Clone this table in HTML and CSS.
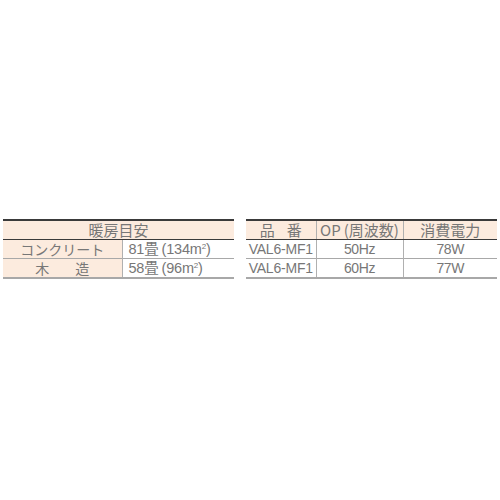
FILE: index.html
```html
<!DOCTYPE html>
<html lang="ja">
<head>
<meta charset="utf-8">
<link rel="stylesheet" href="styles.css">
</head>
<body>
<div class="wrap">
  <table class="spec left">
    <colgroup><col class="c1"><col class="c2"></colgroup>
    <thead>
      <tr><th colspan="2" class="jp">暖房目安</th></tr>
    </thead>
    <tbody>
      <tr><td class="label jp">コンクリート</td><td class="val">81畳<span class="p">(</span>134m<sup>2</sup>)</td></tr>
      <tr><td class="label jp"><span class="spread w54"><span>木</span><span>造</span></span></td><td class="val">58畳<span class="p">(</span>96m<sup>2</sup>)</td></tr>
    </tbody>
  </table>
  <table class="spec right">
    <colgroup><col class="r1"><col class="r2"><col class="r3"></colgroup>
    <thead>
      <tr>
        <th class="jp"><span class="spread w42"><span>品</span><span>番</span></span></th>
        <th class="jp">OP<span class="p">(</span>周波数)</th>
        <th class="jp">消費電力</th>
      </tr>
    </thead>
    <tbody>
      <tr><td class="model">VAL6-MF1</td><td class="num">50Hz</td><td class="num">78W</td></tr>
      <tr><td class="model">VAL6-MF1</td><td class="num">60Hz</td><td class="num">77W</td></tr>
    </tbody>
  </table>
</div>
</body>
</html>
```
FILE: styles.css
```css
html, body {
  margin: 0;
  padding: 0;
  background: #ffffff;
}
.wrap {
  display: flex;
  align-items: flex-start;
  gap: 12px;
  padding: 219px 0 0 3px;
}
.spec {
  border-collapse: collapse;
  table-layout: fixed;
  color: #777777;
  font-family: "Liberation Sans", "Noto Sans CJK JP", sans-serif;
  border-top: 2px solid #3a3a3a;
  border-bottom: 2px solid #a8a8a8;
}
.left { width: 231px; }
.right { width: 251px; }
.c1 { width: 119px; }
.c2 { width: 112px; }
.r1 { width: 70px; }
.r2 { width: 87px; }
.r3 { width: 94px; }
.spec th, .spec td {
  padding: 0;
  height: 18px;
  line-height: 18px;
  white-space: nowrap;
  overflow: hidden;
}
.spec th {
  background: #fcebde;
  font-weight: normal;
  text-align: center;
  border-bottom: 1px solid #3a3a3a;
}
.right th + th { border-left: 1px solid #b0b0b0; }
.spec tbody tr + tr td { border-top: 1px solid #a8a8a8; }
.spec td + td { border-left: 1px solid #b0b0b0; }
.jp {
  font-family: "Noto Sans CJK JP", sans-serif;
  font-size: 14.5px;
}
.spec th.jp { font-size: 15px; }
.label {
  background: #fcebde;
  text-align: center;
  font-size: 14px;
}
.val {
  font-size: 14.5px;
  padding-left: 6px !important;
  text-align: left;
  letter-spacing: -0.2px;
}
.p { margin-left: 3px; }
sup {
  font-size: 8px;
  line-height: 0;
  vertical-align: 5px;
}
.model {
  font-size: 14px;
  text-align: center;
  letter-spacing: -0.2px;
}
.num {
  font-size: 14px;
  text-align: center;
  letter-spacing: -0.4px;
}
.spread {
  display: inline-flex;
  justify-content: space-between;
  vertical-align: top;
}
.w54 { width: 54px; }
.w42 { width: 42px; }
```
